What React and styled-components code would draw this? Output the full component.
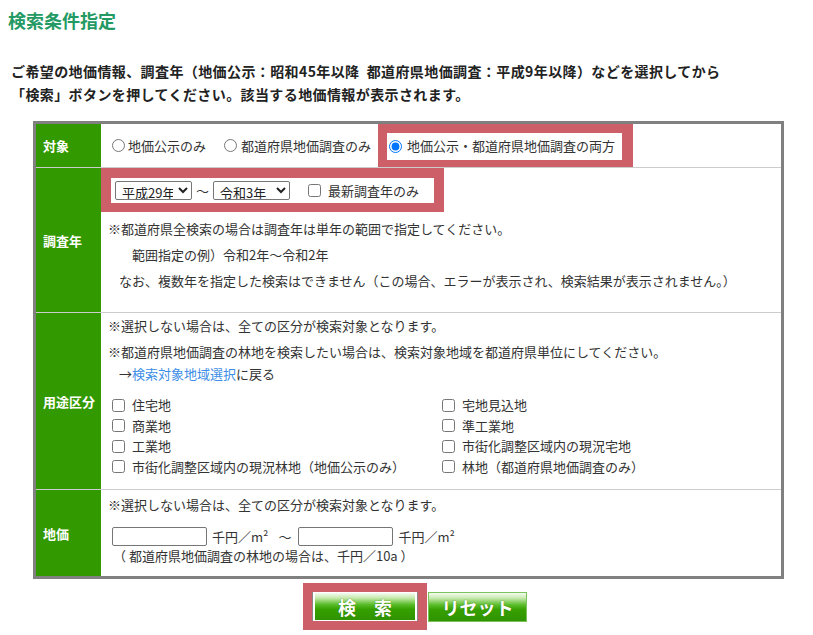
import React from "react";
import styled, { createGlobalStyle } from "styled-components";

const GlobalStyle = createGlobalStyle`
  body {
    margin: 0;
    background: #fff;
    color: #333;
    font-family: "Noto Sans CJK JP", "Noto Sans", sans-serif;
  }
`;

const Page = styled.div`
  padding-top: 8px;
`;

const Heading = styled.h2`
  margin: 0 0 0 8px;
  font-size: 18px;
  line-height: 24px;
  font-weight: bold;
  color: #239a63;
`;

const Intro = styled.p`
  margin: 28px 0 0 11px;
  font-size: 14px;
  line-height: 23px;
  font-weight: bold;
  letter-spacing: 0.4px;
  color: #222;
  white-space: nowrap;
`;

const Frame = styled.div`
  box-sizing: border-box;
  width: 751px;
  margin: 15px 0 0 33px;
  border: 3px solid #808080;
`;

const Row = styled.div`
  display: grid;
  grid-template-columns: 65px 1fr;
  border-top: ${(p) => (p.$first ? "none" : "1px solid #cccccc")};
`;

const Label = styled.div`
  display: flex;
  align-items: center;
  padding-left: 7px;
  background: #339900;
  color: #fff;
  font-size: 13px;
  font-weight: bold;
`;

const Cell = styled.div`
  box-sizing: border-box;
  display: flex;
  flex-direction: ${(p) => (p.$row ? "row" : "column")};
  align-items: ${(p) => (p.$row ? "center" : "flex-start")};
  min-height: ${(p) => p.$h || 0}px;
  padding: ${(p) => p.$pad || "0"};
  font-size: 13px;
`;

const Mark = styled.div`
  display: flex;
  align-self: ${(p) => (p.$stretch ? "stretch" : "flex-start")};
  align-items: center;
  padding: ${(p) => p.$pad};
  background: #cd5f69;
`;

const Inner = styled.div`
  display: flex;
  align-items: center;
  padding: ${(p) => p.$pad};
  background: #fff;
`;

const Option = styled.label`
  display: flex;
  align-items: center;
  gap: ${(p) => p.$gap || 3}px;
  margin-right: ${(p) => p.$mr || 0}px;
  line-height: 18px;
  white-space: nowrap;
  input {
    width: 13px;
    height: 13px;
    margin: 0;
  }
`;

const Select = styled.select`
  width: ${(p) => p.$w}px;
  height: 19px;
  padding: 0 2px;
  font-size: 13px;
  font-family: inherit;
  color: #222;
  border: 1px solid #767676;
  border-radius: 2px;
  background: #fff;
`;

const Tilde = styled.span`
  margin: ${(p) => p.$m};
  font-size: 13px;
`;

const Note = styled.div`
  line-height: ${(p) => p.$lh || 26}px;
  padding-left: ${(p) => p.$indent || 7}px;
  white-space: nowrap;
`;

const Link = styled.a`
  color: #3d8ee6;
  text-decoration: none;
`;

const Checks = styled.div`
  display: grid;
  grid-template-columns: 330px 330px;
  grid-auto-rows: 20.5px;
  margin: 12px 0 0 11px;
`;

const Amount = styled.div`
  display: flex;
  align-items: center;
  height: 22px;
  margin: 7px 0 0 11px;
`;

const TextInput = styled.input`
  box-sizing: border-box;
  width: 95px;
  height: 19px;
  margin: 0;
  border: 1px solid #767676;
  border-radius: 2px;
`;

const Unit = styled.span`
  margin-left: 5px;
`;

const Actions = styled.div`
  display: flex;
  align-items: center;
  justify-content: center;
  width: 751px;
  margin: 4px 0 0 33px;
  padding-left: 13px;
  box-sizing: border-box;
`;

const ButtonMark = styled.div`
  padding: 9px 10px;
  background: #cd5f69;
`;

const GreenButton = styled.button`
  display: block;
  width: ${(p) => p.$w}px;
  height: ${(p) => p.$h}px;
  padding: 0;
  border: 1px solid ${(p) => (p.$edge ? "#ffffff" : "#7cc25a")};
  border-width: ${(p) => (p.$edge ? "1px 2px" : "1px")};
  box-shadow: ${(p) => (p.$edge ? "-1px 0 0 #888, 1px 0 0 #888" : "none")};
  background: linear-gradient(
    to bottom,
    #f4fbef 0%,
    #c8eab0 18%,
    #5cbd2c 42%,
    #36a000 60%,
    #2f9300 100%
  );
  color: #fff;
  font-family: "Noto Sans CJK JP", sans-serif;
  font-size: 18px;
  font-weight: bold;
  line-height: 1;
  text-shadow: 0 0 1px #2a7000;
  white-space: pre;
`;

const upper = ["住宅地", "商業地", "工業地", "市街化調整区域内の現況林地（地価公示のみ）"];
const lower = ["宅地見込地", "準工業地", "市街化調整区域内の現況宅地", "林地（都道府県地価調査のみ）"];

export default function App() {
  const uses = [];
  upper.forEach((u, i) => {
    uses.push(u, lower[i]);
  });

  return (
    <Page>
      <GlobalStyle />
      <Heading>検索条件指定</Heading>
      <Intro>
        ご希望の地価情報、調査年（地価公示：昭和45年以降&nbsp;&nbsp;都道府県地価調査：平成9年以降）などを選択してから
        <br />
        「検索」ボタンを押してください。該当する地価情報が表示されます。
      </Intro>

      <Frame>
        <Row $first>
          <Label>対象</Label>
          <Cell $row $h={43} $pad="0 0 0 11px">
            <Option $mr={18}>
              <input type="radio" name="target" />
              地価公示のみ
            </Option>
            <Option $mr={7} $gap={4}>
              <input type="radio" name="target" />
              都道府県地価調査のみ
            </Option>
            <Mark $stretch $pad="9px 11px 7px 9px">
              <Inner $pad="4px 7px 5px 2px">
                <Option $gap={5}>
                  <input type="radio" name="target" defaultChecked />
                  地価公示・都道府県地価調査の両方
                </Option>
              </Inner>
            </Mark>
          </Cell>
        </Row>

        <Row>
          <Label>調査年</Label>
          <Cell $h={144} $pad="0 0 17px 0">
            <Mark $pad="10px 10px 9px 10px">
              <Inner $pad="3px 15px 3px 4px">
                <Select $w={77} defaultValue="h29">
                  <option value="h29">平成29年</option>
                </Select>
                <Tilde $m="0 4px">～</Tilde>
                <Select $w={77} defaultValue="r3">
                  <option value="r3">令和3年</option>
                </Select>
                <Option $gap={7} style={{ marginLeft: 18 }}>
                  <input type="checkbox" />
                  最新調査年のみ
                </Option>
              </Inner>
            </Mark>
            <Note style={{ marginTop: 4 }}>
              ※都道府県全検索の場合は調査年は単年の範囲で指定してください。
            </Note>
            <Note $indent={31}>範囲指定の例）令和2年～令和2年</Note>
            <Note $indent={18}>
              なお、複数年を指定した検索はできません（この場合、エラーが表示され、検索結果が表示されません。）
            </Note>
          </Cell>
        </Row>

        <Row>
          <Label>用途区分</Label>
          <Cell $h={176} $pad="0 0 11px 0">
            <Note>※選択しない場合は、全ての区分が検索対象となります。</Note>
            <Note>
              ※都道府県地価調査の林地を検索したい場合は、検索対象地域を都道府県単位にしてください。
            </Note>
            <Note $lh={18} $indent={18}>
              →<Link href="#">検索対象地域選択</Link>に戻る
            </Note>
            <Checks>
              {uses.map((u) => (
                <Option key={u} $gap={7}>
                  <input type="checkbox" />
                  {u}
                </Option>
              ))}
            </Checks>
          </Cell>
        </Row>

        <Row>
          <Label>地価</Label>
          <Cell $h={86} $pad="2px 0 11px 0">
            <Note>※選択しない場合は、全ての区分が検索対象となります。</Note>
            <Amount>
              <TextInput type="text" />
              <Unit>千円／m²</Unit>
              <Tilde $m="0 7px 0 10px">～</Tilde>
              <TextInput type="text" />
              <Unit>千円／m²</Unit>
            </Amount>
            <Note $lh={18} $indent={12}>
              （ 都道府県地価調査の林地の場合は、千円／10a ）
            </Note>
          </Cell>
        </Row>
      </Frame>

      <Actions>
        <ButtonMark>
          <GreenButton $w={104} $h={29} $edge>
            {"検　索"}
          </GreenButton>
        </ButtonMark>
        <GreenButton $w={99} $h={30} style={{ marginLeft: 1 }}>
          リセット
        </GreenButton>
      </Actions>
    </Page>
  );
}
